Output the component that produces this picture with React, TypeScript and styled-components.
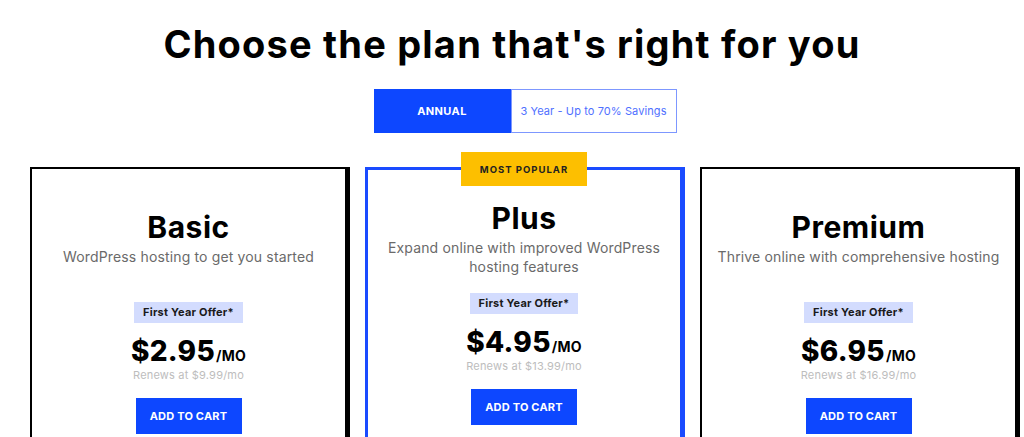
import React from 'react';
import styled, { createGlobalStyle } from 'styled-components';

const GlobalStyle = createGlobalStyle`
	html, body {
		margin: 0;
		padding: 0;
		overflow: hidden;
		background: #fff;
	}
	body {
		font-family: Inter, "Open Sans", Arial, sans-serif;
		color: #111;
	}
`;

interface Plan {
	name: string;
	description: string;
	price: string;
	renews: string;
	featured?: boolean;
}

const plans: Plan[] = [
	{ name: 'Basic', description: 'WordPress hosting to get you started', price: '$2.95', renews: 'Renews at $9.99/mo' },
	{ name: 'Plus', description: 'Expand online with improved WordPress hosting features', price: '$4.95', renews: 'Renews at $13.99/mo', featured: true },
	{ name: 'Premium', description: 'Thrive online with comprehensive hosting', price: '$6.95', renews: 'Renews at $16.99/mo' },
];

const PlanCard: React.FC<{ plan: Plan }> = ({ plan }) => (
	<Card $featured={plan.featured}>
		{plan.featured && <PopularBadge>MOST POPULAR</PopularBadge>}
		<PlanName>{plan.name}</PlanName>
		<PlanDescription>{plan.description}</PlanDescription>
		<OfferTag>First Year Offer*</OfferTag>
		<Price>
			{plan.price}
			<PerMonth>/MO</PerMonth>
		</Price>
		<Renews>{plan.renews}</Renews>
		<CartButton>ADD TO CART</CartButton>
	</Card>
);

export default function App() {
	return (
		<>
			<GlobalStyle />
			<Page>
				<Heading>Choose the plan that's right for you</Heading>
				<Content>
					<TermToggle>
						<TermOption $active>ANNUAL</TermOption>
						<TermOption>3 Year - Up to 70% Savings</TermOption>
					</TermToggle>
					<CardGrid>
						{plans.map((plan) => (
							<PlanCard key={plan.name} plan={plan} />
						))}
					</CardGrid>
				</Content>
			</Page>
		</>
	);
}

const Page = styled.div`
	width: 1024px;
	height: 437px;
	padding-top: 21px;
	box-sizing: border-box;
	overflow: hidden;
`;

const Heading = styled.h1`
	margin: 0;
	text-align: center;
	font-size: 38px;
	line-height: 46px;
	font-weight: 700;
	color: #000;
	letter-spacing: 1.2px;
`;

const Content = styled.div`
	padding: 0 4px 0 30px;
	display: flex;
	flex-direction: column;
	align-items: center;
`;

const TermToggle = styled.div`
	margin-top: 22px;
	display: flex;
	height: 44px;
`;

const TermOption = styled.button<{ $active?: boolean }>`
	box-sizing: border-box;
	height: 44px;
	border: 1px solid ${(p) => (p.$active ? '#0d47ff' : '#7d97ff')};
	background: ${(p) => (p.$active ? '#0d47ff' : '#fff')};
	color: ${(p) => (p.$active ? '#fff' : '#4f70ff')};
	font-family: inherit;
	font-size: 11px;
	font-weight: ${(p) => (p.$active ? 700 : 400)};
	letter-spacing: ${(p) => (p.$active ? '0.4px' : '0.1px')};
	width: ${(p) => (p.$active ? '137px' : '166px')};
	padding: 0;
	cursor: pointer;
`;

const CardGrid = styled.div`
	margin-top: 34px;
	display: grid;
	grid-template-columns: repeat(3, 320px);
	gap: 15px;
`;

const Card = styled.div<{ $featured?: boolean }>`
	position: relative;
	box-sizing: border-box;
	height: 330px;
	border-style: solid;
	border-color: ${(p) => (p.$featured ? '#1a4bff' : '#000')};
	border-width: ${(p) => (p.$featured ? '3px 5px 0 3px' : '2px 5px 0 2px')};
	padding-top: ${(p) => (p.$featured ? '30px' : '40px')};
	display: flex;
	flex-direction: column;
	align-items: center;
	text-align: center;
`;

const PopularBadge = styled.div`
	position: absolute;
	top: -18px;
	left: 50%;
	transform: translateX(-50%);
	width: 126px;
	height: 34px;
	display: flex;
	align-items: center;
	justify-content: center;
	background: #fdbf00;
	color: #222;
	font-size: 9.5px;
	font-weight: 700;
	letter-spacing: 1px;
`;

const PlanName = styled.h2`
	margin: 0 0 2px;
	font-size: 30px;
	line-height: 36px;
	font-weight: 700;
	color: #000;
	letter-spacing: 0.5px;
`;

const PlanDescription = styled.p`
	margin: 0;
	min-height: 40px;
	max-width: 290px;
	font-size: 14px;
	line-height: 19px;
	color: #6a6a6a;
	letter-spacing: 0.15px;
`;

const OfferTag = styled.div`
	margin-top: 15px;
	padding: 4px 9px;
	background: #d3dcfe;
	color: #1a1a1a;
	font-size: 11px;
	line-height: 13px;
	font-weight: 700;
	letter-spacing: 0.2px;
`;

const Price = styled.div`
	margin-top: 14px;
	font-size: 28px;
	line-height: 28px;
	font-weight: 800;
	color: #000;
	letter-spacing: 0.3px;
`;

const PerMonth = styled.span`
	font-size: 14px;
	font-weight: 700;
	margin-left: 1px;
`;

const Renews = styled.div`
	margin-top: -2px;
	font-size: 11px;
	line-height: 14px;
	color: #bdbdbd;
	letter-spacing: 0.2px;
`;

const CartButton = styled.button`
	margin-top: 16px;
	width: 106px;
	height: 36px;
	border: none;
	background: #0d47ff;
	color: #fff;
	font-family: inherit;
	font-size: 11px;
	font-weight: 700;
	letter-spacing: 0.2px;
	cursor: pointer;
`;
